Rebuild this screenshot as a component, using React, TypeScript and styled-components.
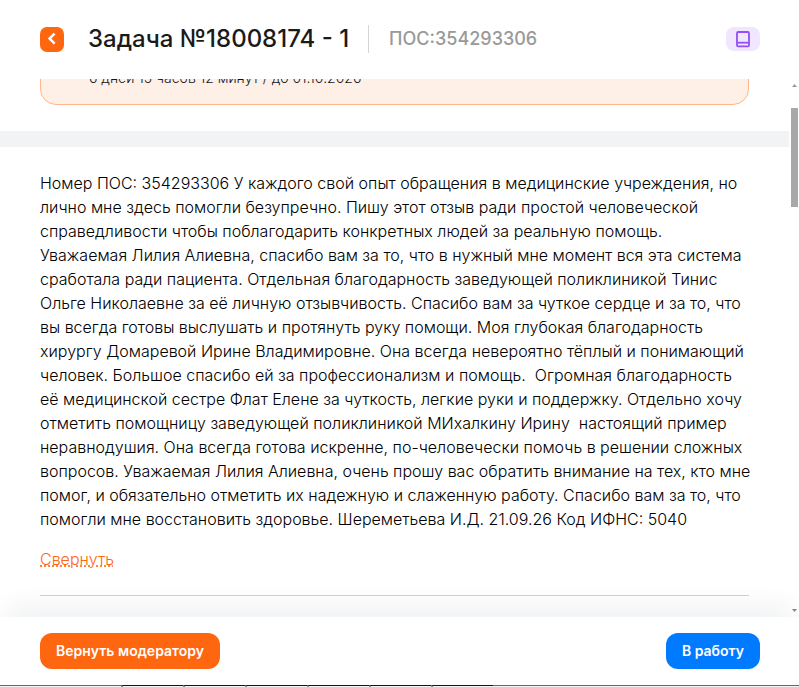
import React from "react";
import styled, { createGlobalStyle } from "styled-components";

const GlobalStyle = createGlobalStyle`
  *, *::before, *::after { box-sizing: border-box; }
  html, body, #root { height: 100%; }
  body {
    margin: 0;
    background: #fff;
    color: #14151a;
    font-family: Inter, "Liberation Sans", sans-serif;
    font-size: 16px;
    line-height: 24px;
  }
  button { font: inherit; border: 0; cursor: pointer; }
`;

const Page = styled.div`
  display: flex;
  flex-direction: column;
  height: 100%;
  overflow: hidden;
`;

const Header = styled.header`
  display: flex;
  align-items: center;
  flex: none;
  padding: 25px 39px 26px 40px;
`;

const BackButton = styled.button`
  display: grid;
  place-items: center;
  width: 24px;
  height: 25px;
  padding: 0;
  border-radius: 7px;
  background: #ff6610;
`;

const Title = styled.h1`
  margin: 0 0 0 24px;
  font-size: 24px;
  line-height: 28px;
  font-weight: 500;
  color: #1a1a1a;
  white-space: nowrap;
`;

const Reference = styled.span`
  margin-left: 19px;
  padding-left: 20px;
  border-left: 1px solid #d5d5d5;
  font-size: 18px;
  line-height: 28px;
  font-weight: 500;
  color: #999;
`;

const BookButton = styled.button`
  display: grid;
  place-items: center;
  width: 34px;
  height: 24px;
  margin-left: auto;
  padding: 0;
  border-radius: 8px;
  background: #f2e6ff;
`;

const Viewport = styled.div`
  display: flex;
  flex: 1;
  min-height: 0;
`;

const Content = styled.main`
  flex: 1;
  min-width: 0;
  overflow: hidden;
`;

const NoticeArea = styled.section`
  display: flex;
  align-items: flex-end;
  height: 52px;
  padding: 0 40px 26px;
`;

const Notice = styled.p`
  flex: 1;
  margin: 0;
  padding: 14px 48px;
  border: 1px solid #ffb68c;
  border-radius: 16px;
  background: #fff0e7;
  font-size: 14px;
  line-height: 24px;
  font-weight: 300;
`;

const Band = styled.div`
  height: 16px;
  background: #f2f3f5;
`;

const Message = styled.section`
  margin: 0 40px;
  padding: 24px 0;
  border-bottom: 1px solid #d0d1d3;
`;

const MessageText = styled.p`
  margin: 0 -4px 16px 0;
  font-weight: 300;
  color: #000;
  white-space: pre-wrap;
`;

const CollapseButton = styled.button`
  display: block;
  padding: 0;
  background: none;
  color: #ff6610;
  font-weight: 300;
  text-decoration: underline dotted;
`;

const ScrollRail = styled.div`
  display: flex;
  flex-direction: column;
  align-items: center;
  flex: none;
  width: 10px;
  padding: 5px 1px 5px 2px;
`;

const Thumb = styled.div`
  width: 7px;
  height: 99px;
  margin: 21px 0 auto;
  background: #a8a8a8;
`;

const Footer = styled.footer`
  display: flex;
  position: relative;
  justify-content: space-between;
  flex: none;
  padding: 16px 39px 16px 40px;
  background: #fff;
  box-shadow: 0 -20px 24px -8px rgba(25, 35, 55, 0.06);
`;

const ActionButton = styled.button<{ $tone: "orange" | "blue" }>`
  height: 36px;
  padding: 0 16px;
  border-radius: 12px;
  background: ${({ $tone }) => ($tone === "orange" ? "#ff6610" : "#007bff")};
  color: #fff;
  font-size: 14px;
  font-weight: 600;
`;

const BottomEdge = styled.div`
  display: flex;
  flex: none;
  height: 2px;
  padding-left: 121px;
  background: linear-gradient(#666 50%, #f4f4f4 50%);
`;

const EdgeTab = styled.span`
  flex: 0 0 62px;
  border-top: 1px solid #151515;
  border-left: 2px solid #888;
`;

const message =
  "Номер ПОС: 354293306 У каждого свой опыт обращения в медицинские учреждения, но лично мне здесь помогли безупречно. Пишу этот отзыв ради простой человеческой справедливости чтобы поблагодарить конкретных людей за реальную помощь. Уважаемая Лилия Алиевна, спасибо вам за то, что в нужный мне момент вся эта система сработала ради пациента. Отдельная благодарность заведующей поликлиникой Тинис Ольге Николаевне за её личную отзывчивость. Спасибо вам за чуткое сердце и за то, что вы всегда готовы выслушать и протянуть руку помощи. Моя глубокая благодарность хирургу Домаревой Ирине Владимировне. Она всегда невероятно тёплый и понимающий человек. Большое спасибо ей за профессионализм и помощь.  Огромная благодарность её медицинской сестре Флат Елене за чуткость, легкие руки и поддержку. Отдельно хочу отметить помощницу заведующей поликлиникой МИхалкину Ирину  настоящий пример неравнодушия. Она всегда готова искренне, по-человечески помочь в решении сложных вопросов. Уважаемая Лилия Алиевна, очень прошу вас обратить внимание на тех, кто мне помог, и обязательно отметить их надежную и слаженную работу. Спасибо вам за то, что помогли мне восстановить здоровье. Шереметьева И.Д. 21.09.26 Код ИФНС: 5040";

export default function App() {
  return (
    <>
      <GlobalStyle />
      <Page>
        <Header>
          <BackButton type="button" aria-label="Назад">
            <svg width="24" height="24" viewBox="0 0 24 24" fill="none" stroke="#fff" strokeWidth="2.5">
              <path d="M14.6 6.6L9.6 11.6L14.6 16.6" />
            </svg>
          </BackButton>
          <Title>Задача №18008174 - 1</Title>
          <Reference>ПОС:354293306</Reference>
          <BookButton type="button" aria-label="Справочник">
            <svg width="16" height="18" viewBox="0 0 16 18" fill="none" stroke="#9050f6" strokeWidth="1.8">
              <rect x="2" y="2" width="12" height="14.4" rx="1.2" />
              <path d="M2 12.7H14" />
            </svg>
          </BookButton>
        </Header>
        <Viewport>
          <Content>
            <NoticeArea>
              <Notice>6 дней 15 часов 12 минут / до 01.10.2026</Notice>
            </NoticeArea>
            <Band />
            <Message>
              <MessageText>{message}</MessageText>
              <CollapseButton type="button">Свернуть</CollapseButton>
            </Message>
          </Content>
          <ScrollRail aria-hidden="true">
            <svg width="5" height="3" viewBox="0 0 5 3">
              <path d="M0 3L2.5 0L5 3Z" fill="#999" />
            </svg>
            <Thumb />
            <svg width="5" height="3" viewBox="0 0 5 3">
              <path d="M0 0L2.5 3L5 0Z" fill="#888" />
            </svg>
          </ScrollRail>
        </Viewport>
        <Footer>
          <ActionButton type="button" $tone="orange">Вернуть модератору</ActionButton>
          <ActionButton type="button" $tone="blue">В работу</ActionButton>
        </Footer>
        <BottomEdge aria-hidden="true">
          {[0, 1, 2, 3, 4, 5].map((tab) => (
            <EdgeTab key={tab} />
          ))}
        </BottomEdge>
      </Page>
    </>
  );
}
